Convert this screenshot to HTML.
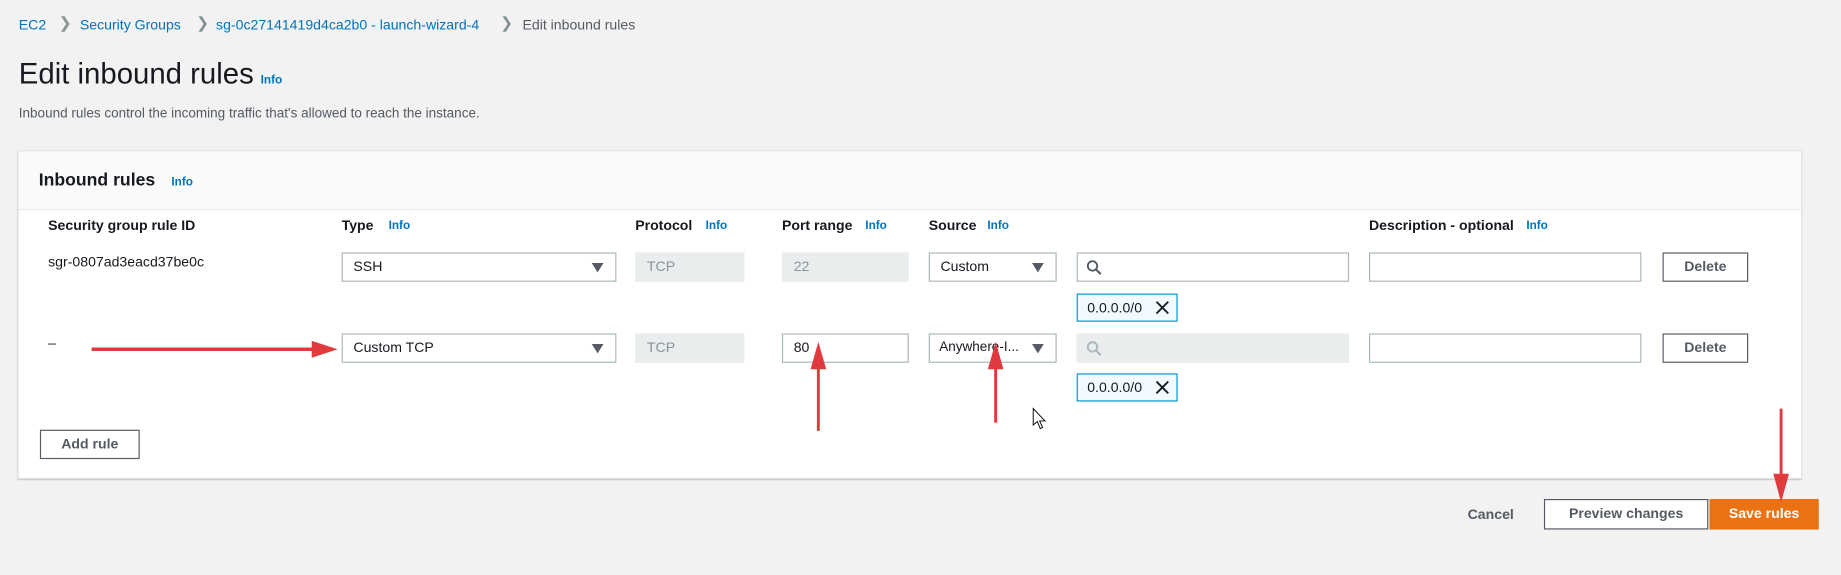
<!DOCTYPE html>
<html><head><meta charset="utf-8"><style>
html,body{margin:0;padding:0;width:1841px;height:575px;overflow:hidden;background:#f2f2f2;}
#w{position:absolute;left:0;top:0;width:1568px;height:490px;transform:scale(1.1741);transform-origin:0 0;font-family:"Liberation Sans",sans-serif;color:#16191f;}
.a{position:absolute;white-space:nowrap;}
.bc{font-size:12px;color:#0073bb;top:14px;}
.sep{color:#879596;font-size:13px;top:12px;}
.info{color:#0073bb;font-size:10px;font-weight:bold;}
.hd{font-size:12px;font-weight:bold;top:185px;}
.box{position:absolute;box-sizing:border-box;border:1px solid #aab7b8;background:#fff;height:25px;font-size:12px;line-height:23px;padding-left:9px;overflow:hidden;white-space:nowrap;}
.dis{background:#eaeded;border-color:#eaeded;color:#879596;}
.tri{position:absolute;right:10px;top:8px;width:0;height:0;border-left:5px solid transparent;border-right:5px solid transparent;border-top:8px solid #545b64;}
.btn{position:absolute;box-sizing:border-box;border:1px solid #545b64;background:#fff;font-size:12px;font-weight:bold;color:#545b64;text-align:center;height:25px;line-height:23px;}
.tok{position:absolute;box-sizing:border-box;border:1px solid #0096c7;background:#f1faff;height:24px;width:86px;font-size:12px;line-height:22px;padding-left:8px;}
.red{position:absolute;background:#e03a3e;}
</style></head><body><div id="w">
<div class="a bc" style="left:16px">EC2</div>
<div class="a sep" style="left:50px">&#x276F;</div>
<div class="a bc" style="left:68px">Security Groups</div>
<div class="a sep" style="left:167px">&#x276F;</div>
<div class="a bc" style="left:184px">sg-0c27141419d4ca2b0 - launch-wizard-4</div>
<div class="a sep" style="left:426px">&#x276F;</div>
<div class="a bc" style="left:445px;color:#545b64">Edit inbound rules</div>
<div class="a" style="left:16px;top:49px;font-size:25px;">Edit inbound rules</div>
<div class="a info" style="left:222px;top:63px">Info</div>
<div class="a" style="left:16px;top:91px;font-size:11.5px;color:#545b64">Inbound rules control the incoming traffic that's allowed to reach the instance.</div>
<div style="position:absolute;left:15px;top:128px;width:1520px;height:280px;background:#fff;border:1px solid #e1e4e4;box-shadow:0 1px 1px #aab7b8;box-sizing:border-box;">
 <div style="height:49px;background:#fafafa;border-bottom:1px solid #eaeded"></div>
</div>
<div class="a" style="left:33px;top:145px;font-size:15px;font-weight:bold">Inbound rules</div>
<div class="a info" style="left:146px;top:150px">Info</div>
<div class="a hd" style="left:41px">Security group rule ID</div>
<div class="a hd" style="left:291px">Type</div><div class="a info" style="left:331px;top:187px">Info</div>
<div class="a hd" style="left:541px">Protocol</div><div class="a info" style="left:601px;top:187px">Info</div>
<div class="a hd" style="left:666px">Port range</div><div class="a info" style="left:737px;top:187px">Info</div>
<div class="a hd" style="left:791px">Source</div><div class="a info" style="left:841px;top:187px">Info</div>
<div class="a hd" style="left:1166px">Description - optional</div><div class="a info" style="left:1300px;top:187px">Info</div>

<div class="a" style="left:41px;top:216px;font-size:12px">sgr-0807ad3eacd37be0c</div>
<div class="box" style="left:291px;top:215px;width:234px">SSH<i class="tri"></i></div>
<div class="box dis" style="left:541px;top:215px;width:93px">TCP</div>
<div class="box dis" style="left:666px;top:215px;width:108px">22</div>
<div class="box" style="left:791px;top:215px;width:109px">Custom<i class="tri"></i></div>
<div class="box" style="left:917px;top:215px;width:232px"><svg width="14" height="14" style="position:absolute;left:7px;top:5px"><circle cx="5.5" cy="5.5" r="4" fill="none" stroke="#545b64" stroke-width="1.6"/><path d="M8.5 8.5L12.5 12.5" stroke="#545b64" stroke-width="1.8"/></svg></div>
<div class="box" style="left:1166px;top:215px;width:232px"></div>
<div class="btn" style="left:1416px;top:215px;width:73px">Delete</div>
<div class="tok" style="left:917px;top:250px">0.0.0.0/0<svg width="12" height="12" style="position:absolute;right:6px;top:5px"><path d="M1 1L11 11M11 1L1 11" stroke="#16191f" stroke-width="1.6"/></svg></div>

<div class="a" style="left:41px;top:285px;font-size:12px">–</div>
<div class="box" style="left:291px;top:284px;width:234px">Custom TCP<i class="tri"></i></div>
<div class="box dis" style="left:541px;top:284px;width:93px">TCP</div>
<div class="box" style="left:666px;top:284px;width:108px">80</div>
<div class="box" style="left:791px;top:284px;width:109px;font-size:11.5px;padding-left:8px">Anywhere-I...<i class="tri" style="background:#fff;"></i></div>
<div class="box dis" style="left:917px;top:284px;width:232px"><svg width="14" height="14" style="position:absolute;left:7px;top:5px"><circle cx="5.5" cy="5.5" r="4" fill="none" stroke="#aab7b8" stroke-width="1.6"/><path d="M8.5 8.5L12.5 12.5" stroke="#aab7b8" stroke-width="1.8"/></svg></div>
<div class="box" style="left:1166px;top:284px;width:232px"></div>
<div class="btn" style="left:1416px;top:284px;width:73px">Delete</div>
<div class="tok" style="left:917px;top:318px">0.0.0.0/0<svg width="12" height="12" style="position:absolute;right:6px;top:5px"><path d="M1 1L11 11M11 1L1 11" stroke="#16191f" stroke-width="1.6"/></svg></div>

<div class="btn" style="left:34px;top:366px;width:85px">Add rule</div>

<div class="a" style="left:1250px;top:431px;font-size:12px;font-weight:bold;color:#545b64">Cancel</div>
<div class="btn" style="left:1315px;top:425px;width:140px;height:26px">Preview changes</div>
<div class="btn" style="left:1456px;top:425px;width:93px;height:26px;background:#ec7211;border-color:#ec7211;color:#fff">Save rules</div>

<svg style="position:absolute;left:0;top:0" width="1568" height="490">
 <g fill="#e03a3e" stroke="#e03a3e">
 <path d="M78 297.5H270" stroke-width="3" fill="none"/><path d="M266 291L286 297.5L266 304Z"/>
 <path d="M697 367V308" stroke-width="2.5" fill="none"/><path d="M691 314L697 293L703 314Z"/>
 <path d="M848 360V308" stroke-width="2.5" fill="none"/><path d="M842 314L848 293L854 314Z"/>
 <path d="M1517 348V410" stroke-width="2.5" fill="none"/><path d="M1511 404L1517 426L1523 404Z"/>
 </g>
 <path d="M880 348V362L883.5 359L886 365L888 364L885.5 358.5L890 358.5Z" fill="#fff" stroke="#000" stroke-width="0.8"/>
</svg>
</div></body></html>
